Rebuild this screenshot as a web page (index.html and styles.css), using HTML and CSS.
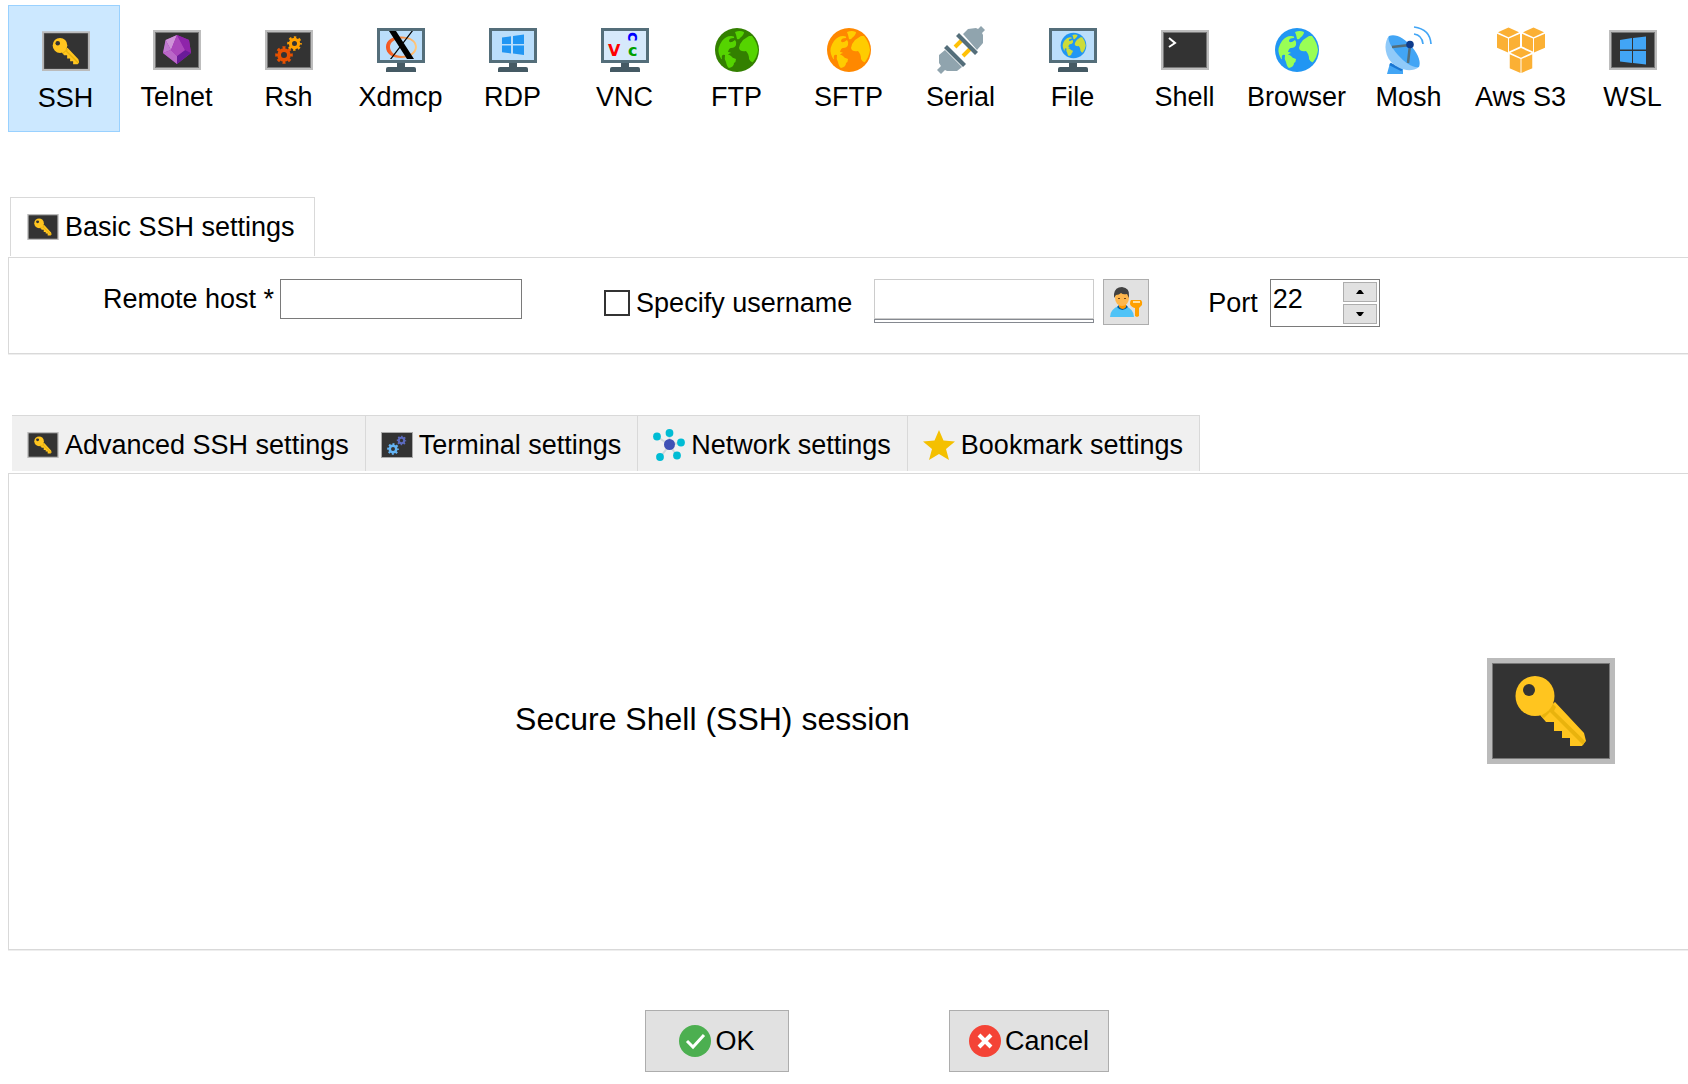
FILE: index.html
```html
<!DOCTYPE html>
<html lang="en">
<head>
<meta charset="utf-8">
<meta name="viewport" content="width=device-width, initial-scale=1">
<title>Session settings</title>
<link rel="stylesheet" href="styles.css">
</head>
<body>
<svg class="sprite" aria-hidden="true">
  <defs>
    <linearGradient id="ring" x1="0" x2="1" y1="0" y2="0">
      <stop offset="0" stop-color="#f4511e"/><stop offset=".5" stop-color="#f58a45"/><stop offset="1" stop-color="#ffcc80"/>
    </linearGradient>
    <symbol id="key" viewBox="0 0 128 106">
      <path fill="#bbb" d="M0 0h128v106H0z"/>
      <path fill="#777" d="M5 5h118v96H5z"/>
      <path fill="#333" d="M6 6h116v94H6z"/>
      <path fill="#ffc51f" d="M53 57l6 7h8v9h8v7h8v8h12l4-5-2-8-29-31z"/>
      <path fill="#e9b30d" d="M54 58l12-12 3 3-2 4 31 30-2 4-33-33-6 6z"/>
      <ellipse cx="48" cy="38" rx="19.500" ry="20" fill="#ffc51f"/>
      <circle cx="42" cy="32" r="6" fill="#333"/>
    </symbol>
    <symbol id="frame" viewBox="0 0 48 48">
      <path fill="#bdbdbd" d="M0 4h48v40H0z"/>
      <path fill="#777" d="M2 6h44v36H2z"/>
      <path fill="#333" d="M3 7h42v34H3z"/>
    </symbol>
    <symbol id="gear" viewBox="-9 -9 18 18">
      <circle r="4.900" fill="none" stroke="currentColor" stroke-width="3.800"/>
      <circle r="7.200" fill="none" stroke="currentColor" stroke-width="3.200" pathLength="16" stroke-dasharray="1 1" stroke-dashoffset=".5"/>
    </symbol>
    <symbol id="monitor" viewBox="0 0 48 48">
      <path fill="#455a64" d="M20 36h8v5h-8zM9 46v-3q0-2 2-2h26q2 0 2 2v3z"/>
      <path fill="#546e7a" d="M0 2h48v35H0z"/>
      <path fill="currentColor" d="M3 5h42v29H3z"/>
    </symbol>
    <symbol id="globe" viewBox="-24 -24 48 48">
      <circle r="22" class="sea"/>
      <path class="land" d="M-18 4q-2-6 3-13 4-5 9-5 4 0 3 2-5 0-5 3 1 3 6-1 2 2 1 5-1 3-5 3-2 0-3 4 2 0 3 1-4 1-2 3 2 1 4 2-7 0-8-3-4-1-3 4-1 1-3-5zM-2-18q5-2 9 0 0 3-4 6-1 2-3 1-1-5-2-7zM12-14l3 0q5 6 6 14-1 7-5 12-2 1-4-3 0-5-3-8-6 1-7-3 1-5 4-8 3-2 6-4zM-12 5q4-1 6 1 1 2 5 3 0 3-2 4 0 4-5 5-2-1-3-6-2-3-1-7z"/>
    </symbol>
    <symbol id="cube" viewBox="0 0 24 27">
      <path fill="#fbb034" d="M12 .5l11 5L12 10.500 1 5.500zM0 7l11.500 5v14.500L0 21.500zM24 7l-11.500 5v14.500l11.500-5z"/>
    </symbol>
  </defs>
</svg>

<nav class="toolbar" aria-label="Session type">
  <button class="session session-active" type="button"><svg class="session-icon" viewBox="0 0 48 48"><use href="#key" y="4" width="48" height="40"/></svg><span>SSH</span></button>
  <button class="session" type="button"><svg class="session-icon" viewBox="0 0 48 48"><use href="#frame"/>
    <path fill="#9c27b0" d="M24 9l12 5 2 13-14 11-14-11 3-13z"/>
    <path fill="#ce93d8" d="M12.500 14L24 9l-6 15z"/><path fill="#c07bd0" d="M12.500 14L18 24l-8 3z"/>
    <path fill="#ab47bc" d="M24 9l8 15H18z"/><path fill="#8e24aa" d="M24 9l12 5 2 13-6-3z"/>
    <path fill="#ba68c8" d="M10 27l8-3 6 6v8z"/><path fill="#6a1b9a" d="M38 27l-6-3-8 6v8z"/><path fill="#ab47bc" d="M18 24h14l-8 6z"/></svg><span>Telnet</span></button>
  <button class="session" type="button"><svg class="session-icon" viewBox="0 0 48 48"><use href="#frame"/>
    <use href="#gear" x="10" y="20" width="18" height="18" color="#e65100"/><use href="#gear" x="22" y="10" width="15" height="15" color="#ffa000"/></svg><span>Rsh</span></button>
  <button class="session" type="button"><svg class="session-icon" viewBox="0 0 48 48"><use href="#monitor" color="#bbdefb"/>
    <path fill="url(#ring)" fill-rule="evenodd" d="M24 10.500c9 0 16 4 16 10.500s-7 11-16 11S9 27.500 9 21s6-10.500 15-10.500zm2 2c-8 0-13 3.500-13 8.500s5 9 12 9 13-4 13-9-5-8.500-12-8.500z"/>
    <path d="M12 5h7l18 28h-7zM34.500 5H36L14.500 33H13z"/></svg><span>Xdmcp</span></button>
  <button class="session" type="button"><svg class="session-icon" viewBox="0 0 48 48"><use href="#monitor" color="#bbdefb"/>
    <path fill="#2196f3" d="M13 11.500l9-1.200V18h-9zM24 10l11-1.500V18H24zM13 19.500h9v8l-9-1.200zM24 19.500h11V29l-11-1.500z"/></svg><span>RDP</span></button>
  <button class="session" type="button"><svg class="session-icon" viewBox="0 0 48 48"><use href="#monitor" color="#d6e9fb"/>
    <text class="glyph" x="7" y="30" fill="#f00">V</text><text class="glyph" x="27" y="30" fill="#00a000">c</text><text class="glyph" transform="translate(27 6) rotate(90)" x="0" y="0" fill="#00f">c</text></svg><span>VNC</span></button>
  <button class="session" type="button"><svg class="session-icon globe-green" viewBox="0 0 48 48"><use href="#globe"/></svg><span>FTP</span></button>
  <button class="session" type="button"><svg class="session-icon globe-orange" viewBox="0 0 48 48"><use href="#globe"/></svg><span>SFTP</span></button>
  <button class="session" type="button"><svg class="session-icon" viewBox="0 0 48 48">
    <path stroke="#ffc107" stroke-width="4" d="M18 21l7-7M26 30l7-7"/>
    <path fill="#90a4ae" d="M26 8l5-5 8-1 2 1 3-3 4 4-3 3 1 2v8l-6 7zM8 24l17 17-5 4H10l-2-1-4 4-4-4 4-4-2-3v-8z"/>
    <path fill="#546e7a" d="M19 10l3-3 19 19-3 3zM7 22l3-3 19 19-3 3z"/></svg><span>Serial</span></button>
  <button class="session" type="button"><svg class="session-icon globe-lime" viewBox="0 0 48 48"><use href="#monitor" color="#bbdefb"/><use href="#globe" x="10.500" y="5.500" width="28" height="28"/></svg><span>File</span></button>
  <button class="session" type="button"><svg class="session-icon" viewBox="0 0 48 48"><use href="#frame"/><path fill="none" stroke="#fff" stroke-width="2" d="M8 12l6 5-6 4"/></svg><span>Shell</span></button>
  <button class="session" type="button"><svg class="session-icon globe-blue" viewBox="0 0 48 48"><use href="#globe"/></svg><span>Browser</span></button>
  <button class="session" type="button"><svg class="session-icon" viewBox="0 0 48 48">
    <path fill="#42a5f5" d="M5 37l13 6v5H2z"/><path stroke="#1976d2" stroke-width="3" d="M5 38l12 6"/>
    <path fill="#90caf9" d="M4 10C-1 16-1 28 6 36c8 8 20 11 28 5z"/>
    <path fill="#42a5f5" d="M4 10c6-3 16 2 23 11 7 8 9 16 7 20-6 1-14-4-21-12S2 13 4 10z"/>
    <path fill="none" stroke="#546e7a" stroke-width="2.500" d="M7 21l18-2-2 18"/>
    <circle cx="25" cy="18.500" r="3.800" fill="#0d3b8c"/>
    <path fill="none" stroke="#42a5f5" stroke-width="1.700" d="M29 8q8 1 9 10M29 1q16 2 17 17"/></svg><span>Mosh</span></button>
  <button class="session" type="button"><svg class="session-icon" viewBox="0 0 48 48"><use href="#cube" x="0" y="1" width="23" height="26"/><use href="#cube" x="25" y="1" width="23" height="26"/><path fill="#fff" d="M24 20l13 6v6H11v-6z"/><use href="#cube" x="12.500" y="21.500" width="23" height="26"/></svg><span>Aws S3</span></button>
  <button class="session" type="button"><svg class="session-icon" viewBox="0 0 48 48"><use href="#frame"/><path fill="#42a5f5" d="M11 14l12-2v11.500H11zM24 12l13-1.500v13H24zM11 25h12v12l-12-1.500zM24 25h13v13.500L24 37z"/></svg><span>WSL</span></button>
</nav>

<main class="content">
  <section class="basic">
    <div class="tabs" role="tablist">
      <button class="tab tab-selected" type="button" role="tab" aria-selected="true"><svg class="tab-icon" viewBox="0 0 32 26"><use href="#key" width="32" height="26"/></svg>Basic SSH settings</button>
    </div>
    <div class="panel form">
      <div class="field field-host"><label for="host">Remote host *</label><input class="textbox host" id="host" type="text"></div>
      <div class="field field-check"><input class="check" id="specify" type="checkbox"><label for="specify">Specify username</label></div>
      <div class="username"><input class="textbox user" type="text" aria-label="Username" disabled></div>
      <button class="user-button" type="button" aria-label="Choose user">
        <svg class="user-icon" viewBox="0 0 33 30">
          <path fill="#4fc3f7" d="M0 30q0-8 9-11h6q9 3 9 11z"/><path fill="#01579b" d="M7 20q5 6 11 0l-2-2H9z"/><path fill="#ff9800" d="M9 15h7v5q-3 4-7 0z"/>
          <ellipse cx="12" cy="11" rx="7" ry="8" fill="#ffb74d"/><path fill="#424242" d="M4 11V7q1-7 8-7 8 1 7 9v2l-2-4q-4 1-6-1-2 2-5 2z"/>
          <path fill="#784719" d="M8 11h2v1H8zM14 11h2v1h-2z"/>
          <path fill="#ffa000" d="M21 13h10q2 2 1 5l-3 3v8l-2 1-2-1v-8q-4-1-5-4 0-3 1-4z"/><path fill="#ffe0a0" d="M23 14h7v2h-7z"/>
        </svg>
      </button>
      <div class="field field-port"><label for="port">Port</label>
        <div class="spinner"><input class="port" id="port" type="text" value="22">
          <div class="steps">
            <button class="step" type="button" aria-label="Increase"><svg class="arrow" viewBox="0 0 8 4"><path d="M0 4l3-4h2l3 4z"/></svg></button>
            <button class="step" type="button" aria-label="Decrease"><svg class="arrow" viewBox="0 0 8 4"><path d="M0 0h8L5 4H3z"/></svg></button>
          </div>
        </div>
      </div>
    </div>
  </section>

  <section class="advanced">
    <div class="tabs tabs-closed" role="tablist">
      <button class="tab" type="button" role="tab"><svg class="tab-icon" viewBox="0 0 32 26"><use href="#key" width="32" height="26"/></svg>Advanced SSH settings</button>
      <button class="tab" type="button" role="tab"><svg class="tab-icon" viewBox="0 0 32 26"><path fill="#aaa" d="M0 0h32v26H0z"/><path fill="#333" d="M1 1h30v24H1z"/><use href="#gear" x="6" y="11" width="12" height="12" color="#64b5f6"/><use href="#gear" x="15.500" y="3.500" width="10" height="10" color="#5c6bc0"/></svg>Terminal settings</button>
      <button class="tab" type="button" role="tab"><svg class="tab-icon tab-icon-tall" viewBox="0 0 32 32"><path stroke="#cfd8dc" stroke-width="2" d="M16.500 16V4M16.500 16L4 7.500M16.500 16L28 13.500M16.500 16L7 28.500M16.500 16L24 27"/><circle cx="16.500" cy="15.500" r="5.500" fill="#3f51b5"/><g fill="#00bcd4"><circle cx="16.500" cy="4" r="3.900"/><circle cx="4" cy="7.500" r="3.900"/><circle cx="28" cy="13.500" r="3.900"/><circle cx="7" cy="28" r="3.900"/><circle cx="24" cy="26.500" r="3.900"/></g></svg>Network settings</button>
      <button class="tab" type="button" role="tab"><svg class="tab-icon tab-icon-tall" viewBox="0 0 32 32"><path fill="#f4c000" d="M16 1l4.500 10.500L32 12.500l-9 7.500 3 11-10-6-10 6 3-11-9-7.500 11.500-1z"/></svg>Bookmark settings</button>
    </div>
    <div class="panel summary">
      <p class="summary-text">Secure Shell (SSH) session</p>
      <svg class="summary-icon" viewBox="0 0 128 106"><use href="#key" width="128" height="106"/></svg>
    </div>
  </section>
</main>

<footer class="actions">
  <button class="action ok" type="button"><svg class="action-icon" viewBox="0 0 32 32"><circle cx="16" cy="16" r="16" fill="#4caf50"/><path fill="none" stroke="#fff" stroke-width="3" d="M8 16l6 6L25 10"/></svg>OK</button>
  <button class="action cancel" type="button"><svg class="action-icon" viewBox="0 0 32 32"><circle cx="16" cy="16" r="16" fill="#f44336"/><path stroke="#fff" stroke-width="4" d="M10 10l12 12M22 10L10 22"/></svg>Cancel</button>
</footer>
</body>
</html>
```
FILE: styles.css
```css
*,
*::after {
  box-sizing: border-box;
}

body {
  display: flex;
  flex-direction: column;
  min-height: 100vh;
  margin: 0;
  padding: 5px 0 12px 8px;
  background: #fff;
  color: #000;
  font: 27px/32px "Liberation Sans", Arial, sans-serif;
}

button,
input {
  margin: 0;
  border-radius: 0;
  color: inherit;
  font: inherit;
}

svg {
  display: block;
  flex: none;
}

.sprite {
  position: absolute;
  width: 0;
  height: 0;
}

/* Session types */
.toolbar {
  display: grid;
  grid-template-columns: repeat(15, minmax(0, 1fr));
}

.session {
  display: flex;
  flex-direction: column;
  align-items: center;
  gap: 7px;
  height: 127px;
  padding: 20px 0 0 1px;
  border: 1px solid transparent;
  background: none;
  white-space: nowrap;
}

.session-active {
  padding: 21px 0 0 3px;
  border-color: #99d1ff;
  background: #cce8ff;
}

.session-icon {
  width: 48px;
  height: 48px;
}

.glyph {
  font: bold 16px "DejaVu Sans", sans-serif;
}

.sea {
  fill: var(--sea);
}

.land {
  fill: var(--land);
}

.globe-green {
  --sea: #338000;
  --land: #55d400;
}

.globe-orange {
  --sea: #ff8800;
  --land: #ffcc00;
}

.globe-lime {
  --sea: #2196f3;
  --land: #cddc39;
}

.globe-blue {
  --sea: #2196f3;
  --land: #99ff55;
}

/* Tabs and panels */
.content {
  display: flex;
  flex: 1;
  flex-direction: column;
  gap: 61px;
  padding-top: 65px;
}

.advanced {
  display: flex;
  flex: 1;
  flex-direction: column;
}

.tabs {
  display: flex;
  margin: 0 0 1px 2px;
}

.tabs-closed {
  margin: 0 0 2px 4px;
}

.tab {
  display: flex;
  align-items: center;
  gap: 6px;
  height: 56px;
  padding: 2px 16px 0 15px;
  border: solid #d9d9d9;
  border-width: 1px 1px 0 0;
  background: #f0f0f0;
  white-space: nowrap;
}

.tab-selected {
  height: 59px;
  padding: 0 19px 0 16px;
  border-left-width: 1px;
  background: #fff;
}

.tab-icon {
  width: 32px;
  height: 26px;
}

.tab-icon-tall {
  height: 32px;
}

.panel {
  border: 1px solid #d9d9d9;
  border-right: 0;
  box-shadow: 0 1px #eee;
}

.form {
  display: flex;
  align-items: flex-start;
  min-height: 97px;
  padding: 21px 0 24px 94px;
}

.field {
  display: flex;
  align-items: center;
  gap: 6px;
  height: 48px;
  white-space: nowrap;
}

.field-host {
  height: 40px;
  margin-right: 82px;
}

.field-check {
  margin-right: 22px;
}

.field-port {
  gap: 12px;
}

.textbox {
  display: block;
  height: 40px;
  padding: 0 3px;
  border: 1px solid #7a7a7a;
  background: #fff;
}

.host {
  width: 242px;
}

.check {
  width: 26px;
  height: 26px;
  border: 2px solid #333;
  background: #fff;
  appearance: none;
}

.check:checked {
  background: #333;
}

.username {
  width: 220px;
  margin-right: 9px;
}

.username::after {
  display: block;
  height: 4px;
  border: 1px solid #858990;
  content: "";
}

.user {
  width: 100%;
  border-color: #ccc;
}

.user-button {
  display: grid;
  place-items: center;
  width: 46px;
  height: 46px;
  margin-right: 59px;
  padding: 0;
  border: 1px solid #adadad;
  background: #e1e1e1;
}

.user-icon {
  width: 33px;
  height: 30px;
}

.spinner {
  display: flex;
  align-items: flex-start;
  width: 110px;
  height: 48px;
  padding: 2px;
  border: 1px solid #7a7a7a;
}

.port {
  flex: 1;
  min-width: 0;
  height: 34px;
  padding: 0;
  border: 0;
  background: none;
}

.steps {
  display: grid;
  gap: 2px;
}

.step {
  display: grid;
  place-items: center;
  width: 34px;
  height: 20px;
  padding: 0;
  border: 1px solid #adadad;
  background: #e1e1e1;
}

.arrow {
  width: 8px;
  height: 4px;
}

.summary {
  display: flex;
  flex: 1;
  align-items: center;
  padding: 0 73px 2px 0;
}

.summary-text {
  flex: 1;
  margin: 0 71px 0 0;
  padding-top: 16px;
  font-size: 32px;
  line-height: 36px;
  text-align: center;
}

.summary-icon {
  width: 128px;
  height: 106px;
}

/* Dialog buttons */
.actions {
  display: flex;
  justify-content: center;
  gap: 160px;
  padding: 60px 0 0 58px;
}

.action {
  display: flex;
  align-items: center;
  justify-content: center;
  gap: 4px;
  height: 62px;
  padding: 0;
  border: 1px solid #adadad;
  background: #e1e1e1;
}

.ok {
  width: 144px;
}

.cancel {
  width: 160px;
}

.action-icon {
  width: 32px;
  height: 32px;
}
```
